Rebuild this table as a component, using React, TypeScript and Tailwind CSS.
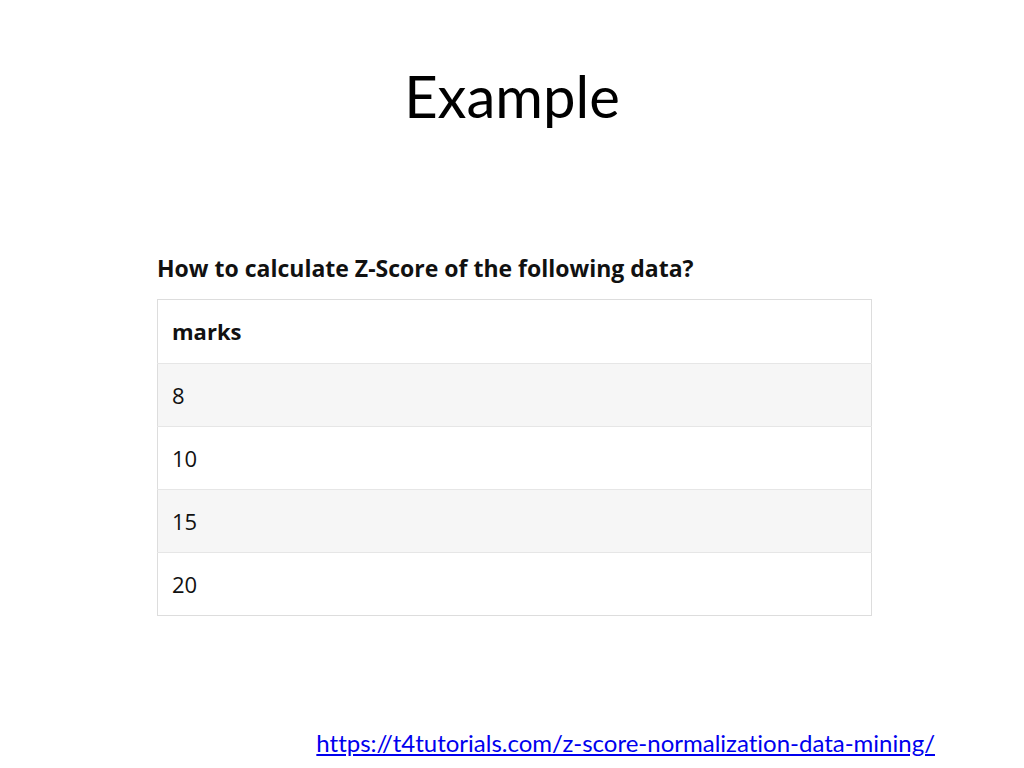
const rows = ["8", "10", "15", "20"];

export default function App() {
  return (
    <main className="flex h-[768px] w-[1024px] flex-col bg-white text-black">
      <h1 className="mt-[58px] text-center font-['Lato',sans-serif] text-[58px] leading-[76px]">
        Example
      </h1>

      <section className="ml-[157px] mt-[118px] w-[715px]">
        <h2 className="font-['Open_Sans',sans-serif] text-[23px] font-bold leading-[32px] text-[#111]">
          How to calculate Z-Score of the following data?
        </h2>
        <table className="mt-[15px] w-full border-collapse border border-[#dddddd] font-['Open_Sans',sans-serif] text-[22px] text-[#111]">
          <thead>
            <tr className="h-[64px] bg-white">
              <th className="px-[14px] text-left font-bold">marks</th>
            </tr>
          </thead>
          <tbody>
            {rows.map((r, i) => (
              <tr
                key={r}
                className={
                  i % 2 === 0
                    ? "h-[63px] border-t border-[#e6e6e6] bg-[#f6f6f6]"
                    : "h-[63px] border-t border-[#e6e6e6] bg-white"
                }
              >
                <td className="px-[14px]">{r}</td>
              </tr>
            ))}
          </tbody>
        </table>
      </section>

      <div className="mt-auto mb-[10px] flex justify-end pr-[89px]">
        <a
          href="#"
          className="font-['Lato',sans-serif] text-[24px] leading-[30px] text-[#0000ee] underline [font-variant-ligatures:none]"
        >
          https://t4tutorials.com/z-score-normalization-data-mining/
        </a>
      </div>
    </main>
  );
}
